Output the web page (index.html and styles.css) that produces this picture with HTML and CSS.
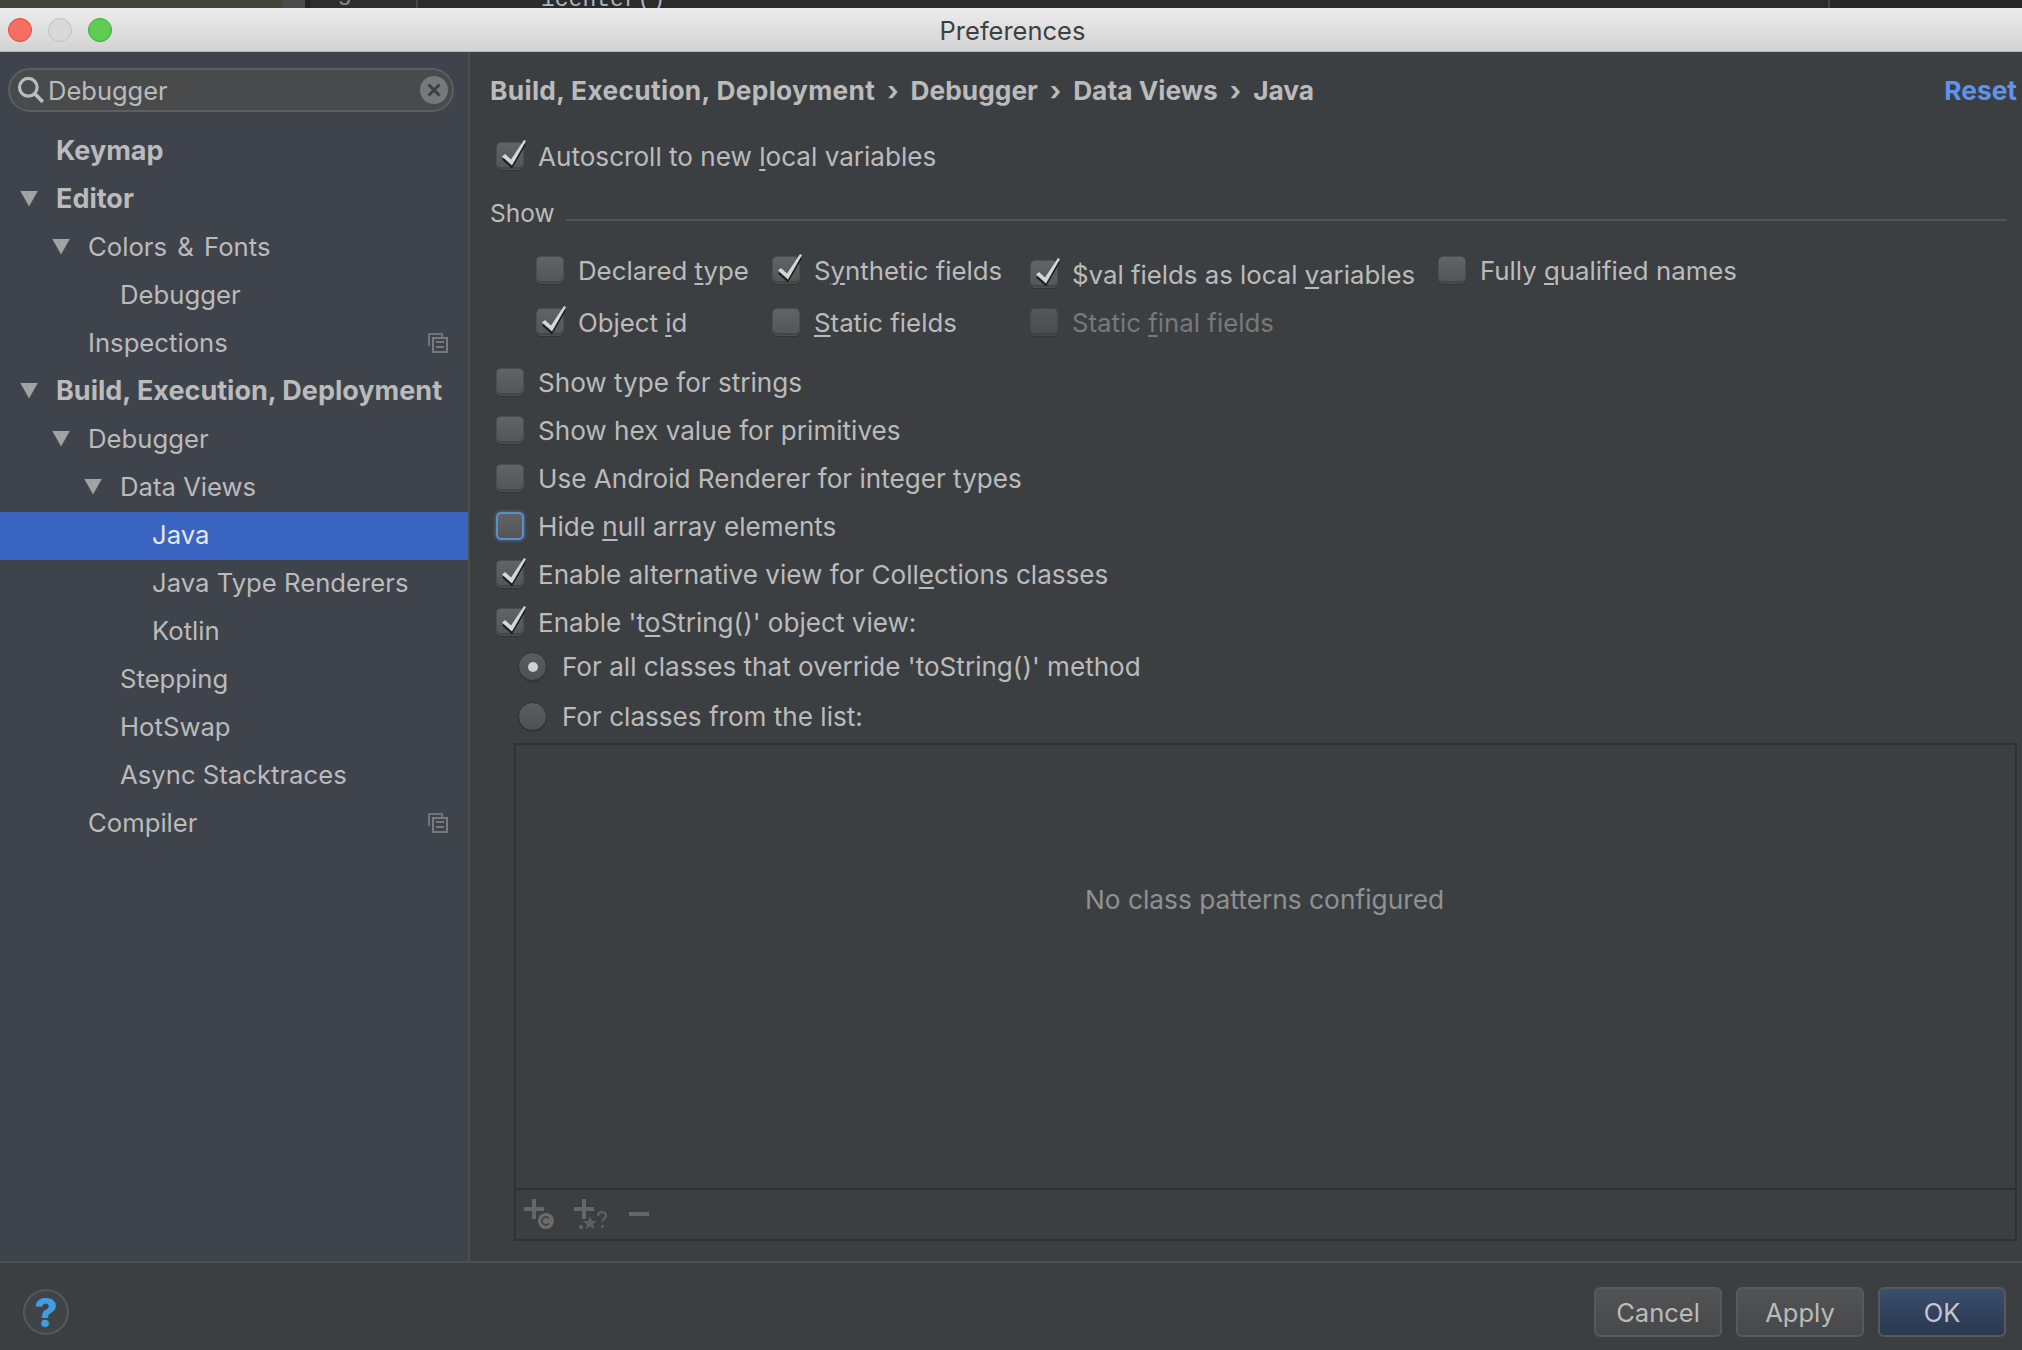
FILE: index.html
```html
<!DOCTYPE html>
<html lang="en">
<head>
<meta charset="utf-8">
<title>Preferences</title>
<link rel="stylesheet" href="styles.css">
</head>
<body>
<svg class="defs" width="0" height="0" aria-hidden="true">
  <symbol id="chk" viewBox="0 0 34 34">
    <path d="M8 24.500 L11 22 L17 27.500 L30 8.500 L32 9.500 L18 33.500 Z" fill="#1d1e1f"/>
    <path d="M8 21.500 L11 19 L17 24.500 L30 5 L32 6 L18 30.500 Z" fill="#d6d6d6"/>
  </symbol>
  <symbol id="sheet" viewBox="0 0 20 20">
    <path d="M1 13V1h13v3" fill="none" stroke="#6b737d" stroke-width="2"/>
    <path d="M5 5h14v14H5z" fill="none" stroke="#7a7a7a" stroke-width="2"/>
    <path d="M8 9h8M8 14h8" stroke="#7a7a7a" stroke-width="2"/>
  </symbol>
</svg>
<div class="strip">
  <div class="seg seg-a"></div>
  <div class="seg seg-b"></div>
  <div class="seg seg-c"><span class="peek-five">5</span></div>
  <div class="seg seg-d"><span class="peek">icenter()</span></div>
  <div class="seg seg-e"></div>
</div>
<header class="titlebar">
  <div class="lights">
    <span class="light red"></span><span class="light grey"></span><span class="light green"></span>
  </div>
  <div class="title">Preferences</div>
</header>
<div class="body">
  <aside class="sidebar">
    <div class="search">
      <svg class="search-icon" width="28" height="28" viewBox="0 0 26 26"><circle cx="10.5" cy="10.5" r="8.2" fill="none" stroke="#bcbcbc" stroke-width="3"/><path d="M16.5 16.5 L24 24" stroke="#bcbcbc" stroke-width="3.4"/></svg>
      <span class="search-text">Debugger</span>
      <svg class="search-clear" width="28" height="28" viewBox="0 0 28 28"><circle cx="14" cy="14" r="14" fill="#767879"/><path d="M8.5 8.5 L19.5 19.5 M19.500 8.500 L8.500 19.500" stroke="#3c3e40" stroke-width="3"/></svg>
    </div>
    <nav class="tree">
      <div class="node l0 bold"><i class="arrow none"></i>Keymap</div>
      <div class="node l0 bold"><i class="arrow"></i>Editor</div>
      <div class="node l1"><i class="arrow"></i><span>Colors <span class="amp">&amp;</span> Fonts</span></div>
      <div class="node l2"><i class="arrow none"></i>Debugger</div>
      <div class="node l1"><i class="arrow none"></i>Inspections<svg class="node-icon"><use href="#sheet"/></svg></div>
      <div class="node l0 bold"><i class="arrow"></i>Build, Execution, Deployment</div>
      <div class="node l1"><i class="arrow"></i>Debugger</div>
      <div class="node l2"><i class="arrow"></i>Data Views</div>
      <div class="node l3 selected"><i class="arrow none"></i>Java</div>
      <div class="node l3"><i class="arrow none"></i>Java Type Renderers</div>
      <div class="node l3"><i class="arrow none"></i>Kotlin</div>
      <div class="node l2"><i class="arrow none"></i>Stepping</div>
      <div class="node l2"><i class="arrow none"></i>HotSwap</div>
      <div class="node l2"><i class="arrow none"></i>Async Stacktraces</div>
      <div class="node l1"><i class="arrow none"></i>Compiler<svg class="node-icon"><use href="#sheet"/></svg></div>
    </nav>
  </aside>
  <main class="main">
    <div class="crumbs">
      <span class="crumb-long">Build, Execution, Deployment</span><span class="sep">›</span>
      <span>Debugger</span><span class="sep">›</span>
      <span>Data Views</span><span class="sep">›</span>
      <span>Java</span>
      <a class="reset">Reset</a>
    </div>
    <div class="opt first"><span class="cb on"><svg><use href="#chk"/></svg></span><span>Autoscroll to new <u>l</u>ocal variables</span></div>
    <div class="group-head"><span>Show</span><span class="rule"></span></div>
    <div class="show-grid">
      <div class="cell"><span class="cb"></span><span>Declared <u>t</u>ype</span></div>
      <div class="cell"><span class="cb on"><svg><use href="#chk"/></svg></span><span>S<u>y</u>nthetic fields</span></div>
      <div class="cell low"><span class="cb on"><svg><use href="#chk"/></svg></span><span>$val fields as local <u>v</u>ariables</span></div>
      <div class="cell"><span class="cb"></span><span>Fully <u>q</u>ualified names</span></div>
      <div class="cell"><span class="cb on"><svg><use href="#chk"/></svg></span><span>Object <u>i</u>d</span></div>
      <div class="cell"><span class="cb"></span><span><u>S</u>tatic fields</span></div>
      <div class="cell off"><span class="cb"></span><span>Static <u>f</u>inal fields</span></div>
    </div>
    <div class="opt"><span class="cb"></span><span>Show type for strings</span></div>
    <div class="opt"><span class="cb"></span><span>Show hex value for primitives</span></div>
    <div class="opt"><span class="cb"></span><span>Use Android Renderer for integer types</span></div>
    <div class="opt"><span class="cb focus"></span><span>Hide <u>n</u>ull array elements</span></div>
    <div class="opt"><span class="cb on"><svg><use href="#chk"/></svg></span><span>Enable alternative view for Coll<u>e</u>ctions classes</span></div>
    <div class="opt"><span class="cb on"><svg><use href="#chk"/></svg></span><span>Enable 't<u>o</u>String()' object view:</span></div>
    <div class="radio r1"><span class="rd on"></span><span>For all classes that override 'toString()' method</span></div>
    <div class="radio r2"><span class="rd"></span><span>For classes from the list:</span></div>
    <section class="list">
      <div class="list-empty">No class patterns configured</div>
      <div class="list-tools">
        <svg class="tool" width="34" height="34" viewBox="0 0 34 34"><path d="M10 0v20M0 10h20" stroke="#666" stroke-width="4"/><circle cx="22" cy="22" r="8" fill="#6c6c6c"/><path d="M25 19.5a4 4 0 1 0 0 5" fill="none" stroke="#454545" stroke-width="1.8"/></svg>
        <svg class="tool" width="34" height="34" viewBox="0 0 34 34"><path d="M10 0v20M0 10h20" stroke="#666" stroke-width="4"/><circle cx="7" cy="28" r="2.2" fill="#5f5f5f"/><path d="M16 18l2 5h5l-4 3.2 1.5 5-4.500-3-4.500 3 1.500-5-4-3.200h5z" fill="#5f5f5f" transform="translate(0 -1)"/><path d="M24 17c0-5 8-5 8-.5 0 3-3.500 3-3.500 6M28.500 26v3" fill="none" stroke="#5f5f5f" stroke-width="2.200"/></svg>
        <svg class="tool minus" width="20" height="4" viewBox="0 0 20 4"><path d="M0 2h20" stroke="#666" stroke-width="4"/></svg>
      </div>
    </section>
  </main>
</div>
<footer class="footer">
  <div class="help">?</div>
  <div class="buttons">
    <button class="btn">Cancel</button>
    <button class="btn">Apply</button>
    <button class="btn primary">OK</button>
  </div>
</footer>
</body>
</html>
```
FILE: styles.css
```css
* { box-sizing: border-box; }
html, body { margin: 0; padding: 0; }
body {
  width: 2022px;
  height: 1350px;
  overflow: hidden;
  display: flex;
  flex-direction: column;
  background: #3c3f41;
  color: #bbbbbb;
  font-family: Inter, "Liberation Sans", sans-serif;
  font-size: 26.1px;
}
.defs { display: block; height: 0; }
u { text-underline-offset: 3px; text-decoration-thickness: 2px; }

.strip { height: 8px; display: flex; overflow: hidden; background: #2b2b2b; flex: none; }
.seg { height: 8px; overflow: hidden; }
.seg-a { width: 282px; background: #45443b; }
.seg-b { width: 23px; background: #4a4a4c; }
.seg-c { width: 113px; background: #2d2d2e; border-left: 5px solid #222; border-right: 2px solid #444; }
.seg-d { width: 1412px; background: #2b2b2b; border-right: 2px solid #444; }
.seg-e { flex: 1; background: #272727; }
.peek { display: block; margin: -11px 0 0 123px; font: 23px/22px "Liberation Mono", monospace; color: #a9b7c6; }
.peek-five { display: block; margin: -11px 0 0 28px; font: 22px/22px "Liberation Mono", monospace; color: #8a8a8a; }

.titlebar {
  height: 44px;
  flex: none;
  display: flex;
  align-items: center;
  justify-content: center;
  padding: 2px 0 0 3px;
  background: linear-gradient(#ececec, #d3d3d3);
  border-bottom: 1px solid #b8b8b8;
  position: relative;
}
.title { color: #3f3f3f; font-size: 25.5px; }
.lights { position: absolute; left: 8px; top: 10px; display: flex; gap: 16px; }
.light { width: 24px; height: 24px; border-radius: 50%; border: 1px solid; }
.red { background: #f56e60; border-color: #e2483f; }
.grey { background: #d9d9d9; border-color: #c2c2c2; }
.green { background: #5fcc53; border-color: #35ad3a; }

.body { flex: 1; display: flex; min-height: 0; }
.sidebar {
  width: 470px;
  flex: none;
  background: #3f434c;
  border-right: 2px solid #4b4c4c;
  padding-top: 16px;
  font-size: 25.7px;
}
.search {
  margin-left: 8px;
  width: 446px;
  height: 44px;
  border-radius: 22px;
  background: #484a4b;
  border: 2px solid #5c5e60;
  display: flex;
  align-items: center;
  padding: 0 4px 0 7px;
}
.search-icon { flex: none; }
.search-text { margin-left: 3px; flex: 1; font-size: 25.5px; }
.search-clear { flex: none; }
.tree { margin-top: 16px; }
.node { height: 48px; display: flex; align-items: center; padding: 0 20px 3px 0; }
.amp { margin: 0 3px; }
.bold { font-weight: 700; font-size: 27px; }
.l0 { padding-left: 20px; }
.l1 { padding-left: 52px; }
.l2 { padding-left: 84px; }
.l3 { padding-left: 116px; }
.arrow {
  width: 18px;
  height: 16px;
  margin-right: 18px;
  flex: none;
  background: #a2a2a2;
  clip-path: polygon(0 0, 100% 0, 50% 100%);
}
.arrow.none { background: none; }
.selected { background: #3a64c2; color: #e6e6e6; }
.node-icon { width: 20px; height: 20px; margin-left: auto; }

.main { flex: 1; min-width: 0; padding: 18px 5px 20px 20px; display: flex; flex-direction: column; }
.crumbs { height: 40px; display: flex; align-items: center; font-weight: 700; font-size: 26.3px; flex: none; }
.crumb-long { letter-spacing: .33px; }
.sep { margin: 0 12px; }
.reset { margin-left: auto; color: #5c94ec; }
.opt { height: 48px; flex: none; display: flex; align-items: center; padding-left: 6px; }
.opt.first { margin-top: 22px; }
.cb {
  position: relative;
  width: 28px;
  height: 28px;
  margin-right: 14px;
  flex: none;
  border-radius: 5px;
  background: linear-gradient(#616365, #535557);
  border: 1px solid #4c4e50;
  box-shadow: inset 0 -2px 0 #434547, 0 1px 0 #313335;
}
.cb svg { position: absolute; left: -3px; top: -8px; width: 34px; height: 34px; }
.cb.focus { border: 2px solid #5b8fcb; box-shadow: 0 0 3px 1px #46688c; }
.group-head { height: 48px; margin-top: 9px; display: flex; align-items: center; flex: none; font-size: 24.5px; }
.rule { flex: 1; height: 2px; background: #515355; margin: 14px 10px 0 11px; }
.show-grid {
  margin: 7px 0 10px 46px;
  display: grid;
  grid-template-columns: 236px 258px 408px auto;
  grid-auto-rows: 52px;
  flex: none;
  font-size: 25.8px;
}
.cell { display: flex; align-items: center; }
.cell .cb { margin-right: 14px; }
.cell.low { padding-top: 8px; }
.cell.off { color: #77797a; }
.cell.off .cb { opacity: .65; }

.radio { display: flex; align-items: center; padding-left: 28px; flex: none; }
.r1 { height: 41px; }
.r2 { height: 50px; margin-top: 4px; }
.rd {
  width: 29px;
  height: 29px;
  margin-right: 15px;
  flex: none;
  border-radius: 50%;
  background: linear-gradient(#5a5c5e, #4e5052);
  border: 1px solid #313335;
  box-shadow: 0 1px 0 #2f3133;
  display: flex;
  align-items: center;
  justify-content: center;
}
.rd.on::after { content: ""; width: 10px; height: 10px; border-radius: 50%; background: #cfcfcf; }

.list {
  flex: 1;
  margin: 2px 0 0 24px;
  border: 2px solid #2f3133;
  display: flex;
  flex-direction: column;
  min-height: 0;
}
.list-empty { flex: 1; display: flex; align-items: center; justify-content: center; color: #8f9193; padding: 0 2px 135px 0; font-size: 26.3px; }
.list-tools {
  height: 51px;
  flex: none;
  border-top: 2px solid #2f3133;
  display: flex;
  align-items: flex-start;
  padding: 9px 0 0 8px;
  gap: 16px;
}
.tool.minus { margin: 13px 0 0 5px; }

.footer {
  height: 89px;
  flex: none;
  border-top: 2px solid #4d4e4f;
  display: flex;
  align-items: flex-start;
  padding: 24px 16px 0 23px;
}
.help {
  width: 46px;
  height: 46px;
  margin-top: 2px;
  border-radius: 50%;
  border: 2px solid #55585a;
  background: #414446;
  display: flex;
  align-items: center;
  justify-content: center;
  color: #3d9fe0;
  font-size: 40px;
  font-weight: 800;
}
.buttons { margin-left: auto; display: flex; gap: 14px; }
.btn {
  width: 128px;
  height: 50px;
  border-radius: 6px;
  border: 2px solid #57595b;
  background: linear-gradient(#515355, #46484a);
  color: #bbbbbb;
  font-family: inherit;
  font-size: 25.5px;
  padding: 0;
}
.btn.primary { background: linear-gradient(#3b4e6e, #2a3850); color: #c3c7cd; }
```
